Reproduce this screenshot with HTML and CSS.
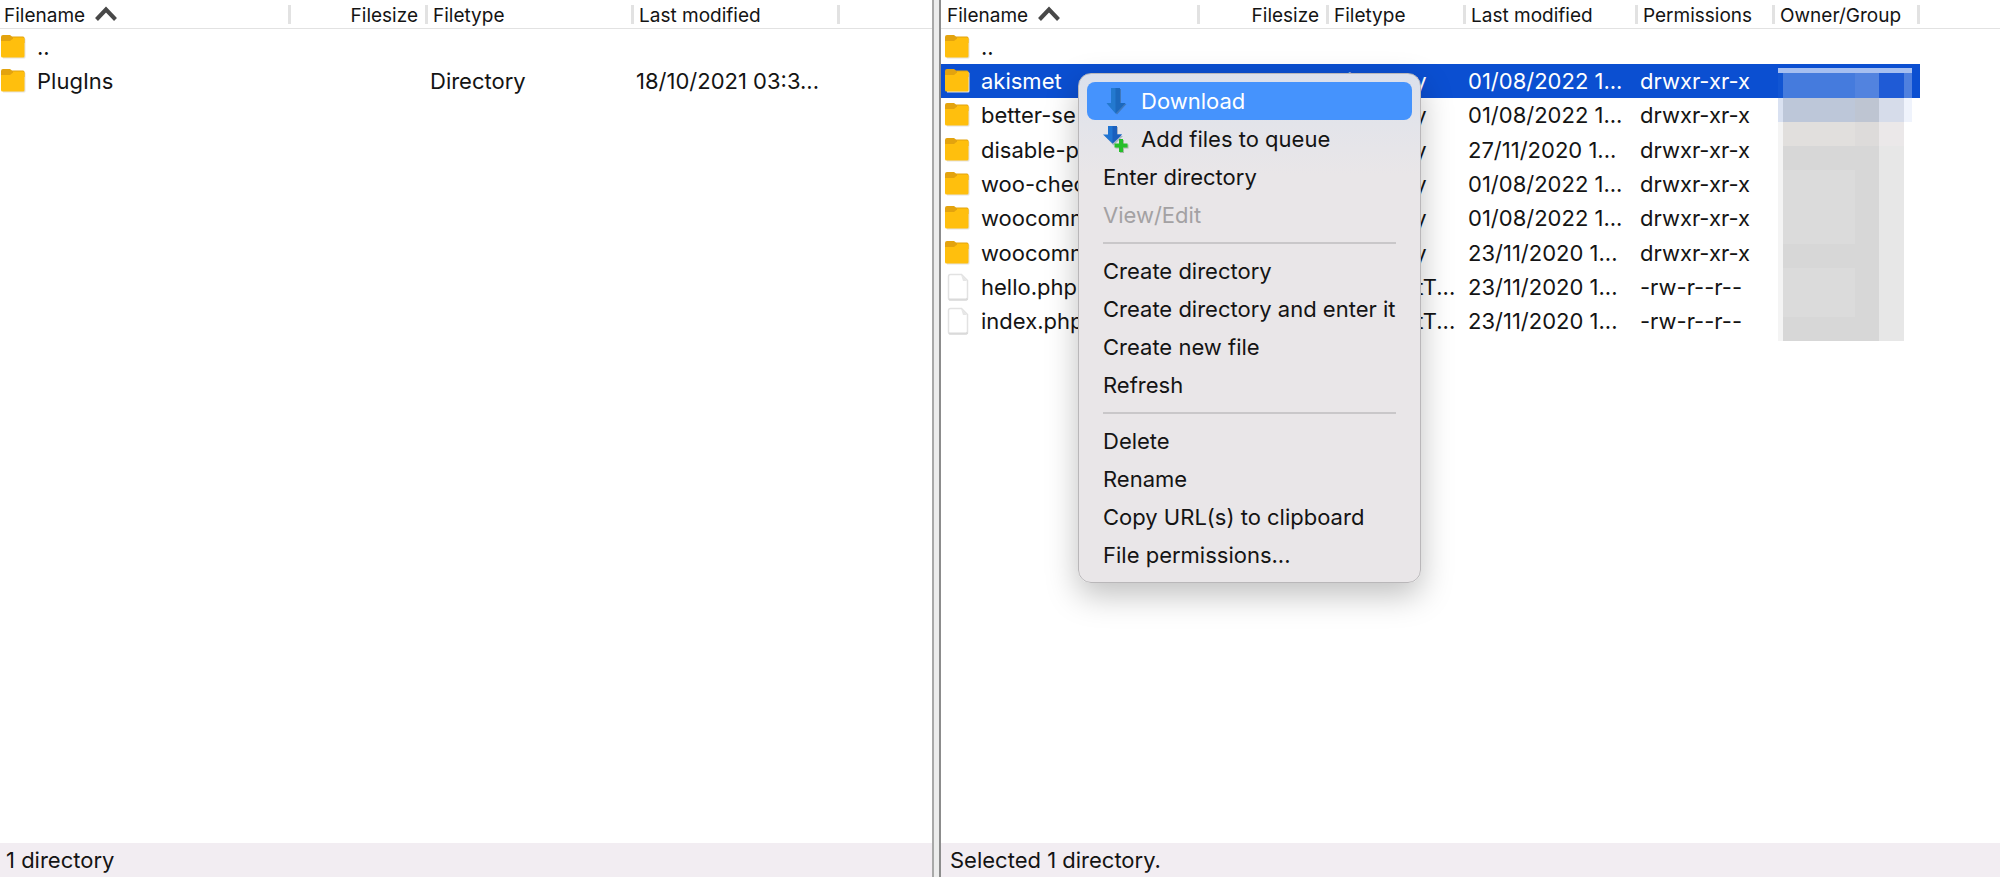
FILE: index.html
```
<!DOCTYPE html>
<html lang="en">
<head>
    <meta charset="UTF-8">
    <meta name="viewport" content="width=device-width, initial-scale=1.0">
    <title>File Transfer</title>
    <link rel="stylesheet" href="styles.css">
</head>
<body>
    <!-- Shared icons -->
    <svg class="sprite" aria-hidden="true">
        <symbol id="icon-folder" viewBox="0 0 26 26">
            <path d="M2 4h22a1.500 1.500 0 0 1 1.500 1.500V23a1.500 1.500 0 0 1-1.500 1.500H3z" fill="#e4e2e0"/>
            <path d="M1 3a2 2 0 0 1 2-2h7l2 1.500h11a1.500 1.500 0 0 1 1.500 1.500v5H1z" fill="#e3a30e"/>
            <path d="M1 7h8.500c1.500 0 2-2 3.500-2V3.500h10A1.500 1.500 0 0 1 24.500 5v17a1.500 1.500 0 0 1-1.500 1.500H2.500A1.500 1.500 0 0 1 1 22z" fill="#ffbf0d"/>
        </symbol>
        <symbol id="icon-file" viewBox="0 0 26 28">
            <path d="M6.500 1.500h11l6 6V25a2 2 0 0 1-2 2h-15a2 2 0 0 1-2-2V3.500a2 2 0 0 1 2-2z" fill="#fff" stroke="#e2e2e2" stroke-width="1.500"/>
            <path d="M17 1.500l6 6.500h-4z" fill="#e6e6e6"/>
            <path d="M5 26.500h17.500l1-1" fill="none" stroke="#dadada" stroke-width="2"/>
        </symbol>
        <symbol id="icon-sort" viewBox="0 0 24 16">
            <path d="M2.500 13.500L12 3.500l9.500 10" fill="none" stroke="#484848" stroke-width="4"/>
        </symbol>
    </svg>

    <main class="panes">
        <section class="pane" aria-label="Local site">
            <table class="files">
                <colgroup>
                    <col class="col-name">
                    <col class="col-size">
                    <col class="col-type">
                    <col class="col-date">
                    <col>
                </colgroup>
                <thead>
                    <tr>
                        <th aria-sort="ascending">Filename<svg class="sort"><use href="#icon-sort"/></svg></th>
                        <th class="size">Filesize</th>
                        <th>Filetype</th>
                        <th>Last modified</th>
                        <th></th>
                    </tr>
                </thead>
                <tbody>
                    <tr>
                        <td><svg class="icon"><use href="#icon-folder"/></svg>..</td>
                        <td></td><td></td><td></td><td></td>
                    </tr>
                    <tr>
                        <td><svg class="icon"><use href="#icon-folder"/></svg>PlugIns</td>
                        <td></td>
                        <td>Directory</td>
                        <td>18/10/2021 03:3...</td>
                        <td></td>
                    </tr>
                </tbody>
            </table>
            <footer class="status">1 directory</footer>
        </section>

        <div class="splitter"></div>

        <section class="pane remote" aria-label="Remote site">
            <table class="files">
                <colgroup>
                    <col class="col-name">
                    <col class="col-size">
                    <col class="col-type">
                    <col class="col-date">
                    <col class="col-perm">
                    <col class="col-owner">
                    <col>
                </colgroup>
                <thead>
                    <tr>
                        <th aria-sort="ascending">Filename<svg class="sort"><use href="#icon-sort"/></svg></th>
                        <th class="size">Filesize</th>
                        <th>Filetype</th>
                        <th>Last modified</th>
                        <th>Permissions</th>
                        <th>Owner/Group</th>
                        <th></th>
                    </tr>
                </thead>
                <tbody>
                    <tr>
                        <td><svg class="icon"><use href="#icon-folder"/></svg>..</td>
                        <td></td><td></td><td></td><td></td><td></td><td></td>
                    </tr>
                    <tr class="selected">
                        <td><svg class="icon"><use href="#icon-folder"/></svg>akismet</td>
                        <td></td>
                        <td>Directory</td>
                        <td>01/08/2022 1...</td>
                        <td>drwxr-xr-x</td>
                        <td class="owner">
                            <!-- Masks the owner names of all rows -->
                            <svg class="mask" width="134" height="273" viewBox="0 0 134 273" aria-hidden="true">
                                <path d="M0 54h5v219H0z" fill="#f4f4f4"/>
                                <path d="M5 54h96v219H5z" fill="#dbdbdb"/>
                                <path d="M5 78h96v24H5zM5 176h96v24H5zM5 249h96v24H5zM77 78h24v195H77z" fill="#d7d7d7"/>
                                <path d="M5 54h96v24H5z" fill="#e1dfdd"/>
                                <path d="M77 54h24v24H77z" fill="#dddbda"/>
                                <path d="M101 54h25v219h-25z" fill="#e7e7e7"/>
                                <path d="M101 54h25v24h-25z" fill="#ebe8e9"/>
                                <path d="M0 30h134v24H0z" fill="#eff3fc"/>
                                <path d="M0 30h5v24H0z" fill="#d9e1f1"/>
                                <path d="M5 30h72v24H5z" fill="#bdc7d9"/>
                                <path d="M77 30h24v24H77z" fill="#bec5d2"/>
                                <path d="M101 30h25v24h-25z" fill="#d6dcea"/>
                                <path d="M0 5h5v25H0z" fill="#1155d3"/>
                                <path d="M5 5h72v25H5z" fill="#457bdd"/>
                                <path d="M77 5h24v25H77z" fill="#5283df"/>
                                <path d="M101 5h25v25h-25z" fill="#1f5bd6"/>
                                <path d="M126 5h8v25h-8z" fill="#4f80df"/>
                                <path d="M0 0h134v5H0z" fill="#a6bff0"/>
                            </svg>
                        </td>
                        <td></td>
                    </tr>
                    <tr>
                        <td><svg class="icon"><use href="#icon-folder"/></svg>better-se</td>
                        <td></td>
                        <td>Directory</td>
                        <td>01/08/2022 1...</td>
                        <td>drwxr-xr-x</td>
                        <td></td><td></td>
                    </tr>
                    <tr>
                        <td><svg class="icon"><use href="#icon-folder"/></svg>disable-p</td>
                        <td></td>
                        <td>Directory</td>
                        <td>27/11/2020 1...</td>
                        <td>drwxr-xr-x</td>
                        <td></td><td></td>
                    </tr>
                    <tr>
                        <td><svg class="icon"><use href="#icon-folder"/></svg>woo-chec</td>
                        <td></td>
                        <td>Directory</td>
                        <td>01/08/2022 1...</td>
                        <td>drwxr-xr-x</td>
                        <td></td><td></td>
                    </tr>
                    <tr>
                        <td><svg class="icon"><use href="#icon-folder"/></svg>woocomm</td>
                        <td></td>
                        <td>Directory</td>
                        <td>01/08/2022 1...</td>
                        <td>drwxr-xr-x</td>
                        <td></td><td></td>
                    </tr>
                    <tr>
                        <td><svg class="icon"><use href="#icon-folder"/></svg>woocomm</td>
                        <td></td>
                        <td>Directory</td>
                        <td>23/11/2020 1...</td>
                        <td>drwxr-xr-x</td>
                        <td></td><td></td>
                    </tr>
                    <tr>
                        <td><svg class="icon"><use href="#icon-file"/></svg>hello.php</td>
                        <td></td>
                        <td>PHP-textT...</td>
                        <td>23/11/2020 1...</td>
                        <td>-rw-r--r--</td>
                        <td></td><td></td>
                    </tr>
                    <tr>
                        <td><svg class="icon"><use href="#icon-file"/></svg>index.php</td>
                        <td></td>
                        <td>PHP-textT...</td>
                        <td>23/11/2020 1...</td>
                        <td>-rw-r--r--</td>
                        <td></td><td></td>
                    </tr>
                </tbody>
            </table>
            <footer class="status">Selected 1 directory.</footer>

            <div class="menu">
                <button class="active">
                    <svg class="menu-icon" viewBox="0 0 26 28">
                        <path d="M9 2h9v15h5.500L14 27.500 4.500 17H9z" fill="#3f78bd"/>
                        <path d="M8 1h9v15h5.500L12.500 26.500 3.500 16H8z" fill="#2379cf"/>
                        <path d="M12.500 1H17v15h5.500l-10 10.500z" fill="#1c68bd"/>
                    </svg>
                    Download
                </button>
                <button>
                    <svg class="menu-icon" viewBox="0 0 26 28">
                        <path d="M6 2h9v9h5l-9.500 9.500L2 11h4z" fill="#a9b3c4"/>
                        <path d="M5 1h9v8.500h5L9.500 18.500 0 9.500h5z" fill="#1f74d2"/>
                        <path d="M9.500 1H14v8.500h5l-9.500 9z" fill="#1a5fbd"/>
                        <path d="M17 15h4v4.500h4.500v4H21V28h-4v-4.500h-4.500v-4H17z" fill="#a9b8a9"/>
                        <path d="M16 14h4v4.500h4.500v4H20V27h-4v-4.500h-4.500v-4H16z" fill="#27bf2b"/>
                    </svg>
                    Add files to queue
                </button>
                <button>Enter directory</button>
                <button disabled>View/Edit</button>
                <hr>
                <button>Create directory</button>
                <button>Create directory and enter it</button>
                <button>Create new file</button>
                <button>Refresh</button>
                <hr>
                <button>Delete</button>
                <button>Rename</button>
                <button>Copy URL(s) to clipboard</button>
                <button>File permissions...</button>
            </div>
        </section>
    </main>
</body>
</html>
```
FILE: styles.css
```
* {
    box-sizing: border-box;
}
body {
    margin: 0;
    font-family: Inter, "Liberation Sans", sans-serif;
    font-size: 22px;
    color: #141414;
    background: #fff;
}
.sprite {
    display: none;
}
.panes {
    display: grid;
    grid-template-columns: 932fr 9px 1059fr;
    height: 100vh;
}
.pane {
    position: relative;
    display: flex;
    flex-direction: column;
    min-width: 0;
}
.splitter {
    background: #ececec;
    border-left: 2px solid #a8a8a8;
    border-right: 2px solid #8c8c8c;
}

/* File lists */
.files {
    width: 100%;
    table-layout: fixed;
    border-collapse: separate;
    border-spacing: 0;
}
.col-name { width: 291px; }
.col-size { width: 137px; }
.col-type { width: 206px; }
.col-date { width: 206px; }
.remote .col-name { width: 259px; }
.remote .col-size { width: 129px; }
.remote .col-type { width: 137px; }
.remote .col-date { width: 172px; }
.col-perm { width: 137px; }
.col-owner { width: 145px; }

.files th {
    height: 29px;
    padding: 4px 0 0 5px;
    border-bottom: 1px solid #e2e2e2;
    background: linear-gradient(#e2e2e2, #e2e2e2) right 0 top 5px / 3px 19px no-repeat;
    font-size: 19px;
    font-weight: 400;
    line-height: 24px;
    text-align: left;
    white-space: nowrap;
}
.files th:first-child {
    padding-left: 4px;
}
.remote th:first-child {
    padding-left: 6px;
}
.files th.size {
    padding-right: 10px;
    text-align: right;
}
.files th:last-child {
    background: none;
}
.sort {
    width: 24px;
    height: 16px;
    margin-left: 9px;
}
.files td {
    height: 34px;
    padding: 0 0 0 2px;
    line-height: 34px;
    white-space: nowrap;
}
.files tbody tr:nth-child(3n+1) td {
    height: 35px;
}
.icon {
    width: 26px;
    height: 28px;
    margin-right: 11px;
    vertical-align: -6px;
}
.files td:first-child {
    padding-left: 0;
}
.remote td:first-child {
    padding-left: 3px;
}
.selected td:not(:last-child) {
    background: #0b4fd1;
    color: #fff;
}
.owner {
    position: relative;
}
.mask {
    position: absolute;
    top: 4px;
    left: 3px;
}

.status {
    margin-top: auto;
    padding-left: 6px;
    background: #f2edf2;
    line-height: 34px;
}
.remote .status {
    padding-left: 9px;
}

/* Context menu */
.menu {
    position: absolute;
    top: 73px;
    left: 137px;
    width: 343px;
    padding: 8px;
    border: 1px solid #b9b7b9;
    border-radius: 13px;
    background: linear-gradient(#dbe0ec, #e3e4ea 50px, #e9e6e8 100px);
    box-shadow: 0 12px 32px rgba(0, 0, 0, 0.25);
}
.menu button {
    display: flex;
    align-items: center;
    width: 100%;
    height: 38px;
    padding: 0 16px;
    border: 0;
    border-radius: 8px;
    background: none;
    color: inherit;
    font: inherit;
    text-align: left;
    white-space: nowrap;
}
.menu button.active {
    background: #4593fd;
    color: #fff;
}
.menu button:disabled {
    color: #a3a1a3;
}
.menu hr {
    height: 2px;
    margin: 8px 16px;
    border: 0;
    background: #c9c7c9;
}
.menu-icon {
    width: 26px;
    height: 28px;
    margin-right: 12px;
}
```
